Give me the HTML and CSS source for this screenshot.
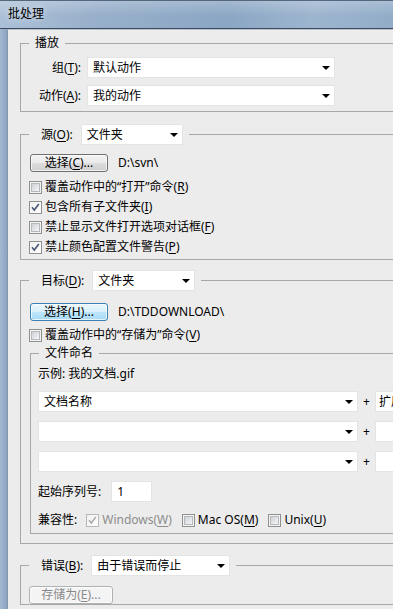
FILE: index.html
```html
<!DOCTYPE html>
<html>
<head>
  <meta charset="utf-8">
  <title>批处理</title>
  <link rel="stylesheet" href="styles.css">
</head>
<body>
  <div class="window">
    <div class="titlebar">批处理</div>
    <div class="frame">
      <div class="frame-edge"></div>
      <div class="client">

        <!-- 播放 -->
        <fieldset class="group group-play">
          <legend class="legend-text">播放</legend>
          <div class="play-grid">
            <span class="row-label">组(<u>T</u>):</span>
            <span class="select w-play">默认动作<i class="arrow"></i></span>
            <span class="row-label">动作(<u>A</u>):</span>
            <span class="select w-play">我的动作<i class="arrow"></i></span>
          </div>
        </fieldset>

        <!-- 源 -->
        <fieldset class="group group-src">
          <legend class="legend-pick">
            <span class="pick-row">
              <span>源(<u>O</u>):</span>
              <span class="select w-src">文件夹<i class="arrow"></i></span>
            </span>
          </legend>
          <div class="group-body src-body">
            <div class="button-row">
              <span class="btn w-choose">选择(<u>C</u>)...</span>
              <span>D:\svn\</span>
            </div>
            <div class="check"><span class="cb"></span>覆盖动作中的“打开”命令(<u>R</u>)</div>
            <div class="check"><span class="cb on"><svg viewBox="0 0 11 11" width="11" height="11"><path d="M2 5.2 L4.3 8 L8.8 2" fill="none" stroke="#4c5d7a" stroke-width="1.7"/></svg></span>包含所有子文件夹(<u>I</u>)</div>
            <div class="check"><span class="cb"></span>禁止显示文件打开选项对话框(<u>F</u>)</div>
            <div class="check"><span class="cb on"><svg viewBox="0 0 11 11" width="11" height="11"><path d="M2 5.2 L4.3 8 L8.8 2" fill="none" stroke="#4c5d7a" stroke-width="1.7"/></svg></span>禁止颜色配置文件警告(<u>P</u>)</div>
          </div>
        </fieldset>

        <!-- 目标 -->
        <fieldset class="group group-dst">
          <legend class="legend-pick">
            <span class="pick-row">
              <span>目标(<u>D</u>):</span>
              <span class="select w-dst">文件夹<i class="arrow"></i></span>
            </span>
          </legend>
          <div class="group-body dst-body">
            <div class="button-row">
              <span class="btn btn-focus w-choose">选择(<u>H</u>)...</span>
              <span>D:\TDDOWNLOAD\</span>
            </div>
            <div class="check check-save"><span class="cb"></span>覆盖动作中的“存储为”命令(<u>V</u>)</div>

            <fieldset class="group group-naming">
              <legend class="legend-text">文件命名</legend>
              <div class="naming-body">
                <div class="sample">示例: 我的文档.gif</div>
                <div class="name-row">
                  <span class="select w-name">文档名称<i class="arrow"></i></span>
                  <span class="plus">+</span>
                  <span class="field w-ext">扩展名</span>
                </div>
                <div class="name-row">
                  <span class="select w-name"><i class="arrow"></i></span>
                  <span class="plus">+</span>
                  <span class="field w-ext"></span>
                </div>
                <div class="name-row">
                  <span class="select w-name"><i class="arrow"></i></span>
                  <span class="plus">+</span>
                  <span class="field w-ext"></span>
                </div>
                <div class="seq-row">
                  <span>起始序列号:</span>
                  <span class="field w-seq">1</span>
                </div>
                <div class="compat-row">
                  <span class="compat-label">兼容性:</span>
                  <span class="compat-item disabled"><span class="cb on off"><svg viewBox="0 0 11 11" width="11" height="11"><path d="M2 5.2 L4.3 8 L8.8 2" fill="none" stroke="#a9a9a9" stroke-width="1.5"/></svg></span>Windows(<u>W</u>)</span>
                  <span class="compat-item"><span class="cb"></span>Mac OS(<u>M</u>)</span>
                  <span class="compat-item"><span class="cb"></span>Unix(<u>U</u>)</span>
                </div>
              </div>
            </fieldset>
          </div>
        </fieldset>

        <!-- 错误 -->
        <fieldset class="group group-err">
          <legend class="legend-pick">
            <span class="pick-row">
              <span>错误(<u>B</u>):</span>
              <span class="select w-err">由于错误而停止<i class="arrow"></i></span>
            </span>
          </legend>
          <div class="group-body err-body">
            <span class="btn btn-disabled w-save">存储为(<u>E</u>)...</span>
          </div>
        </fieldset>

      </div>
    </div>
  </div>
</body>
</html>
```

FILE: styles.css
```css
html,
body {
  margin: 0;
  overflow: hidden;
}

body {
  font-family: "Noto Sans", "Noto Sans CJK SC", sans-serif;
  font-size: 12px;
  line-height: 16px;
  color: #000;
  background-color: #ececec;
}

u {
  text-decoration-thickness: 1px;
  text-underline-offset: 2px;
}

.window {
  width: 540px;
  height: 609px;
  display: flex;
  flex-direction: column;
}

/* Title bar */
.titlebar {
  height: 27px;
  padding-left: 8px;
  line-height: 25px;
  border-top: 1px solid #54677c;
  border-bottom: 1px solid #3b4b5d;
  background:
    linear-gradient(180deg, rgba(255, 255, 255, 0.22), rgba(255, 255, 255, 0) 55%),
    linear-gradient(90deg, #acc1d8 0%, #97afca 18%, #8ba6c4 42%, #9db5cf 58%, #8ea9c6 78%, #97b0cb 100%);
  text-shadow: 0 0 6px rgba(255, 255, 255, 0.7);
}

.frame {
  flex: 1;
  display: flex;
}

.frame-edge {
  width: 7px;
  background: linear-gradient(90deg, #a3b9d1, #8ba5c2);
}

.client {
  flex: 1;
  padding: 5px 0 0 12px;
  border-left: 1px solid #8496aa;
  border-top: 1px solid #b9c4cf;
  background-color: #ececec;
}

/* Group boxes */
.group {
  margin: 0;
  padding: 0;
  min-width: 0;
  border: 1px solid #a8a8a8;
}

.group > legend {
  margin-left: 8px;
  padding: 0 6px;
  line-height: 16px;
}

.group > legend.legend-pick {
  padding: 0 6px 0 12px;
}

.pick-row {
  display: flex;
  align-items: center;
  gap: 8px;
}

.group-play {
  margin-bottom: 12px;
}

.group-src {
  margin-bottom: 10px;
}

.group-dst {
  margin-bottom: 11px;
}

.play-grid {
  display: grid;
  grid-template-columns: 60px 248px;
  column-gap: 6px;
  row-gap: 7px;
  align-items: center;
  padding: 6px 0 5px 0;
}

.row-label {
  text-align: right;
}

/* Drop-down lists and text fields */
.select {
  height: 21px;
  box-sizing: border-box;
  display: flex;
  align-items: center;
  justify-content: space-between;
  padding: 0 4px 0 5px;
  background-color: #fff;
  border: 1px solid #e4e4e4;
}

.arrow {
  width: 0;
  height: 0;
  margin-left: auto;
  border-left: 4px solid transparent;
  border-right: 4px solid transparent;
  border-top: 4px solid #000;
}

.w-play { width: 248px; }
.w-src { width: 102px; }
.w-dst { width: 103px; }
.w-err { width: 139px; }
.w-name { width: 320px; }

.field {
  height: 21px;
  box-sizing: border-box;
  padding: 0 5px;
  line-height: 19px;
  background-color: #fff;
  border: 1px solid #e4e4e4;
}

.w-ext { width: 120px; padding-left: 3px; }
.w-seq { width: 41px; }

/* Buttons */
.btn {
  height: 18px;
  box-sizing: border-box;
  display: inline-flex;
  align-items: center;
  justify-content: center;
  border: 1px solid #707070;
  border-radius: 3px;
  background: linear-gradient(180deg, #f2f2f2 0%, #ebebeb 50%, #dddddd 51%, #cfcfcf 100%);
  box-shadow: inset 0 0 0 1px rgba(255, 255, 255, 0.7);
}

.btn-focus {
  border-color: #3c7fb1;
  background: linear-gradient(180deg, #eaf6fd 0%, #d9f0fc 50%, #bee6fd 51%, #a7d9f5 100%);
}

.btn-disabled {
  color: #8a8a8a;
  border-color: #adb2b5;
  background: #f4f4f4;
}

.w-choose { width: 78px; }
.w-save { width: 84px; }

.group-body {
  padding-left: 8px;
}

.button-row {
  display: flex;
  align-items: center;
  gap: 10px;
  margin-bottom: 5px;
}

.button-row .btn {
  margin-left: 1px;
}

.src-body {
  padding-top: 9px;
  padding-bottom: 2px;
}

.dst-body {
  padding-top: 12px;
}

.err-body {
  padding-top: 10px;
  padding-left: 8px;
}

/* Check boxes */
.check {
  display: flex;
  align-items: center;
  height: 20px;
}

.check-save {
  margin-top: -1px;
}

.cb {
  width: 13px;
  height: 13px;
  box-sizing: border-box;
  flex: none;
  display: flex;
  align-items: center;
  justify-content: center;
  margin-right: 3px;
  border: 1px solid #8e8f8f;
  background-color: #f4f4f4;
}

.cb::before {
  content: "";
  width: 7px;
  height: 7px;
  border: 1px solid #b5babf;
  background: linear-gradient(135deg, #cdd1d6, #f6f6f6);
}

.cb.on {
  background: linear-gradient(135deg, #f0f0f0, #fff);
}

.cb.on::before {
  display: none;
}

.cb.off {
  border-color: #b8b8b8;
}

/* File naming */
.group-naming {
  margin: 0 0 9px 1px;
}

.naming-body {
  padding: 5px 0 5px 7px;
}

.name-row {
  display: flex;
  align-items: center;
  margin-top: 9px;
}

.plus {
  width: 17px;
  text-align: center;
}

.seq-row {
  display: flex;
  align-items: center;
  gap: 10px;
  margin-top: 9px;
}

.compat-row {
  display: flex;
  align-items: center;
  height: 16px;
  margin-top: 10px;
}

.compat-label {
  margin-right: 9px;
}

.compat-item {
  display: flex;
  align-items: center;
  margin-right: 10px;
}

.compat-item.disabled {
  color: #8d8d8d;
}
```
